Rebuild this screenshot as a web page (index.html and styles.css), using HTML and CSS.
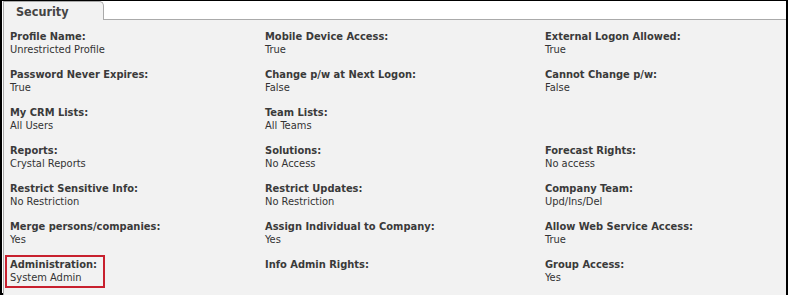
FILE: index.html
```html
<!DOCTYPE html>
<html lang="en">
<head>
    <meta charset="UTF-8">
    <title>Security</title>
    <link rel="stylesheet" href="styles.css">
</head>
<body>
    <div class="frame">
        <div class="tabs">
            <div class="tab">Security</div>
        </div>
        <div class="panel">
            <div class="field"><div class="label">Profile Name:</div><div class="value">Unrestricted Profile</div></div>
            <div class="field"><div class="label">Mobile Device Access:</div><div class="value">True</div></div>
            <div class="field"><div class="label">External Logon Allowed:</div><div class="value">True</div></div>

            <div class="field"><div class="label">Password Never Expires:</div><div class="value">True</div></div>
            <div class="field"><div class="label">Change p/w at Next Logon:</div><div class="value">False</div></div>
            <div class="field"><div class="label">Cannot Change p/w:</div><div class="value">False</div></div>

            <div class="field"><div class="label">My CRM Lists:</div><div class="value">All Users</div></div>
            <div class="field"><div class="label">Team Lists:</div><div class="value">All Teams</div></div>
            <div class="field"></div>

            <div class="field"><div class="label">Reports:</div><div class="value">Crystal Reports</div></div>
            <div class="field"><div class="label">Solutions:</div><div class="value">No Access</div></div>
            <div class="field"><div class="label">Forecast Rights:</div><div class="value">No access</div></div>

            <div class="field"><div class="label">Restrict Sensitive Info:</div><div class="value">No Restriction</div></div>
            <div class="field"><div class="label">Restrict Updates:</div><div class="value">No Restriction</div></div>
            <div class="field"><div class="label">Company Team:</div><div class="value">Upd/Ins/Del</div></div>

            <div class="field"><div class="label">Merge persons/companies:</div><div class="value">Yes</div></div>
            <div class="field"><div class="label">Assign Individual to Company:</div><div class="value">Yes</div></div>
            <div class="field"><div class="label">Allow Web Service Access:</div><div class="value">True</div></div>

            <div class="field">
                <div class="highlight"><div class="label">Administration:</div><div class="value">System Admin</div></div>
            </div>
            <div class="field"><div class="label">Info Admin Rights:</div><div class="value"></div></div>
            <div class="field"><div class="label">Group Access:</div><div class="value">Yes</div></div>
        </div>
    </div>
</body>
</html>
```

FILE: styles.css
```css
* {
    margin: 0;
    padding: 0;
    box-sizing: border-box;
}
body {
    font-family: "DejaVu Sans Condensed", "DejaVu Sans", sans-serif;
    font-size: 11px;
    background: #fff;
}
.frame {
    width: 788px;
    height: 295px;
    border: 2px solid #000;
    border-top-width: 1px;
    background: #fff;
    display: flex;
    flex-direction: column;
}
.tabs {
    height: 20px;
    display: flex;
    align-items: flex-end;
    padding-left: 1px;
}
.tab {
    width: 101px;
    height: 19px;
    margin-bottom: -1px;
    padding: 2px 0 0 12px;
    background: #f2f2f2;
    border: 1px solid #aaa;
    border-bottom: none;
    border-radius: 0 5px 0 0;
    color: #444;
    font-size: 12.5px;
    font-weight: bold;
    line-height: 16px;
    z-index: 1;
}
.panel {
    flex: 1;
    background: #f2f2f2;
    border: 1px solid #aaa;
    border-right: none;
    margin-left: 1px;
    padding: 10px 0 0 6px;
    display: grid;
    grid-template-columns: 255px 280px 1fr;
    grid-auto-rows: 38px;
}
.label {
    color: #3a3a3a;
    font-weight: bold;
    line-height: 13px;
}
.value {
    color: #333;
    line-height: 13px;
}
.highlight {
    display: inline-block;
    width: 100px;
    margin: -3px 0 0 -5px;
    padding: 1px 0 2px 3px;
    border: 2px solid #c8202e;
}
```
